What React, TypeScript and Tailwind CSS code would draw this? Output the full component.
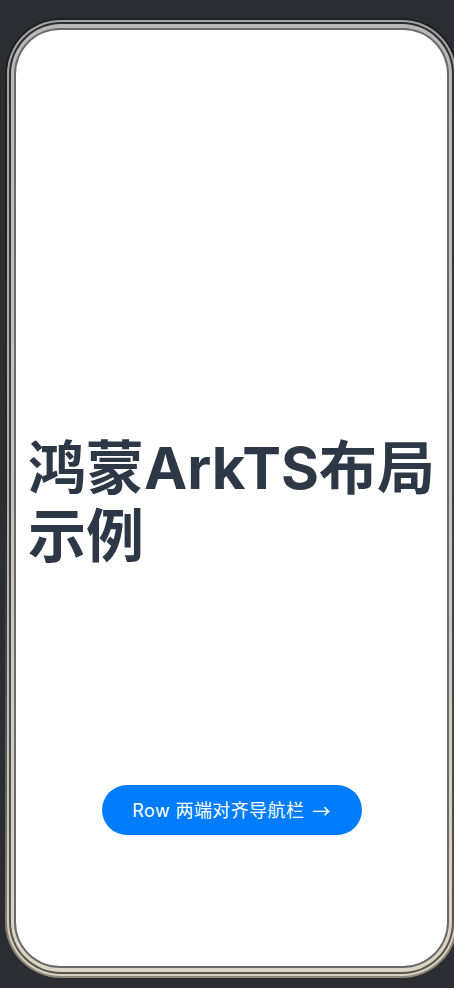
export default function App() {
  return (
    <div className="h-[988px] w-[454px] overflow-hidden bg-[#2c2d32] pl-[5px] pt-[18px]">
      {/* phone body */}
      <div className="h-[960px] w-[453px] rounded-[56px] bg-gradient-to-b from-[#1e1f22] via-[#2a2a2c] to-[#8f8a7c] p-[2px]">
        <div className="h-full w-full rounded-[54px] bg-gradient-to-b from-[#a3a3a5] via-[#b0b0b0] to-[#d8d0bc] p-[2px]">
          <div className="h-full w-full rounded-[52px] bg-gradient-to-b from-[#2e2e30] via-[#3c3c3e] to-[#5a5650] p-[2px]">
            <div className="h-full w-full rounded-[50px] bg-gradient-to-b from-[#b8b8b8] via-[#c4c4c4] to-[#ddd6c4] px-[3px] py-[4px]">
              <div className="h-full w-full rounded-[46px] bg-[#6a6a6a] p-[2px]">
                <Screen />
              </div>
            </div>
          </div>
        </div>
      </div>
    </div>
  );
}

function Screen() {
  return (
    <div
      className="flex h-full w-full flex-col overflow-hidden rounded-[44px] bg-white pt-[189px]"
      style={{ fontFamily: 'Inter, "Noto Sans CJK SC", sans-serif' }}
    >
      <div className="flex flex-1 items-center px-3">
        <h1 className="text-[58px] font-bold leading-[68px] text-[#2d3846]">
          鸿蒙ArkTS布局示例
        </h1>
      </div>
      <div className="flex justify-center pb-[131px]">
        <button
          type="button"
          className="flex h-[50px] w-[260px] items-center justify-center rounded-full bg-[#007dff] text-[18px] tracking-[0.4px] text-white"
        >
          Row 两端对齐导航栏
          <span className="ml-2 font-['Noto_Sans_CJK_SC',sans-serif]">→</span>
        </button>
      </div>
    </div>
  );
}
